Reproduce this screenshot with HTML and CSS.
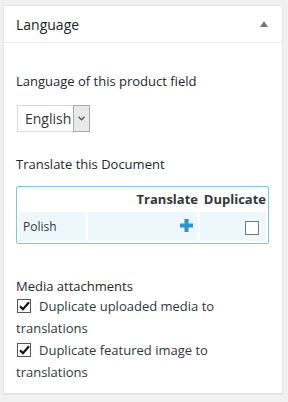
FILE: index.html
```html
<!DOCTYPE html>
<html lang="en">
<head>
    <meta charset="UTF-8">
    <title>Language</title>
    <link rel="stylesheet" href="styles.css">
</head>
<body>
    <div class="postbox">
        <div class="postbox-header">
            <h2>Language</h2>
            <span class="toggle-arrow"></span>
        </div>
        <div class="inside">
            <p class="field-label">Language of this product field</p>
            <div class="lang-select">
                <span class="lang-value">English</span>
                <span class="lang-arrow">
                    <svg width="7" height="5" viewBox="0 0 7 5"><path d="M0.5 0.8 L3.5 3.8 L6.5 0.8" fill="none" stroke="#555" stroke-width="1.3"/></svg>
                </span>
            </div>

            <p class="section-title">Translate this Document</p>
            <table class="translations">
                <thead>
                    <tr>
                        <th></th>
                        <th class="col-translate">Translate</th>
                        <th class="col-duplicate">Duplicate</th>
                    </tr>
                </thead>
                <tbody>
                    <tr>
                        <td class="lang-name">Polish</td>
                        <td class="col-translate">
                            <svg class="plus" width="13" height="13" viewBox="0 0 13 13"><path d="M4.5 0h4v4.5h4.5v4h-4.5v4.5h-4v-4.5h-4.5v-4h4.5z" fill="#2c94cf"/></svg>
                        </td>
                        <td class="col-duplicate"><span class="box"></span></td>
                    </tr>
                </tbody>
            </table>

            <div class="media">
                <p class="media-title">Media attachments</p>
                <div class="check-row"><span class="box checked"><svg width="11" height="10" viewBox="0 0 11 10"><path d="M1 5.2 L4 8.2 L10 1.2" fill="none" stroke="#111" stroke-width="2.2"/></svg></span>Duplicate uploaded media to translations</div>
                <div class="check-row"><span class="box checked"><svg width="11" height="10" viewBox="0 0 11 10"><path d="M1 5.2 L4 8.2 L10 1.2" fill="none" stroke="#111" stroke-width="2.2"/></svg></span>Duplicate featured image to translations</div>
            </div>
        </div>
    </div>
</body>
</html>
```

FILE: styles.css
```css
body {
    margin: 0;
    padding: 5px 5px 9px 3px;
    background: #f1f1f1;
    font-family: "Open Sans", "Noto Sans", sans-serif;
    color: #32373c;
}
.postbox {
    width: 278px;
    background: #fff;
    border: 1px solid #e5e5e5;
    box-shadow: 0 1px 1px rgba(0, 0, 0, 0.04);
}
.postbox-header {
    height: 36px;
    display: flex;
    align-items: center;
    justify-content: space-between;
    padding: 0 14px 0 12px;
    border-bottom: 1px solid #eee;
}
.postbox-header h2 {
    margin: 0;
    font-size: 14px;
    font-weight: 400;
    color: #1d2327;
}
.toggle-arrow {
    width: 0;
    height: 0;
    border-left: 4px solid transparent;
    border-right: 4px solid transparent;
    border-bottom: 6px solid #72777c;
}
.inside {
    padding: 28px 12px 10px;
    font-size: 13px;
}
.field-label {
    margin: 0 0 14px;
    line-height: 20px;
    color: #23282d;
}
.lang-select {
    display: flex;
    width: 71px;
    height: 25px;
    margin-left: 1px;
    border: 1px solid #ddd;
}
.lang-value {
    flex: 1;
    padding-left: 7px;
    font-size: 14px;
    line-height: 25px;
    color: #32373c;
}
.lang-arrow {
    width: 15px;
    display: flex;
    align-items: center;
    justify-content: center;
    background: #e9e9e9;
    border: 1px solid #aaa;
    margin: -1px -1px -1px 0;
}
.section-title {
    margin: 22px 0 12px;
    line-height: 20px;
    color: #23282d;
}
.translations {
    width: 253px;
    border: 1px solid #7fc5e6;
    border-radius: 2px;
    border-spacing: 2px;
    margin-bottom: 33px;
}
.translations th {
    padding: 1px 0 2px;
    font-weight: 700;
    font-size: 13px;
    line-height: 18px;
    color: #32373c;
    text-align: right;
}
.translations td {
    height: 29px;
    padding: 0 4px;
    background: #eef7fc;
    font-size: 12px;
    color: #32373c;
}
.translations th.col-duplicate {
    padding-right: 0;
    width: 66px;
}
.translations td.lang-name {
    width: 59px;
    padding-left: 4px;
}
.translations td.col-translate {
    text-align: right;
    padding-right: 5px;
}
.translations td.col-duplicate {
    text-align: right;
    padding-right: 7px;
}
.plus {
    vertical-align: -1px;
}
.box {
    display: inline-block;
    box-sizing: border-box;
    width: 14px;
    height: 14px;
    border: 1px solid #757575;
    background: #fff;
    vertical-align: middle;
}
.media-title {
    margin: 0;
    line-height: 18px;
    color: #23282d;
}
.check-row {
    line-height: 22px;
    color: #32373c;
}
.box.checked {
    position: relative;
    width: 14px;
    height: 14px;
    margin: 0 8px 0 1px;
    border-color: #555;
    vertical-align: -2px;
}
.box.checked svg {
    position: absolute;
    left: 1px;
    top: 1px;
}
```
